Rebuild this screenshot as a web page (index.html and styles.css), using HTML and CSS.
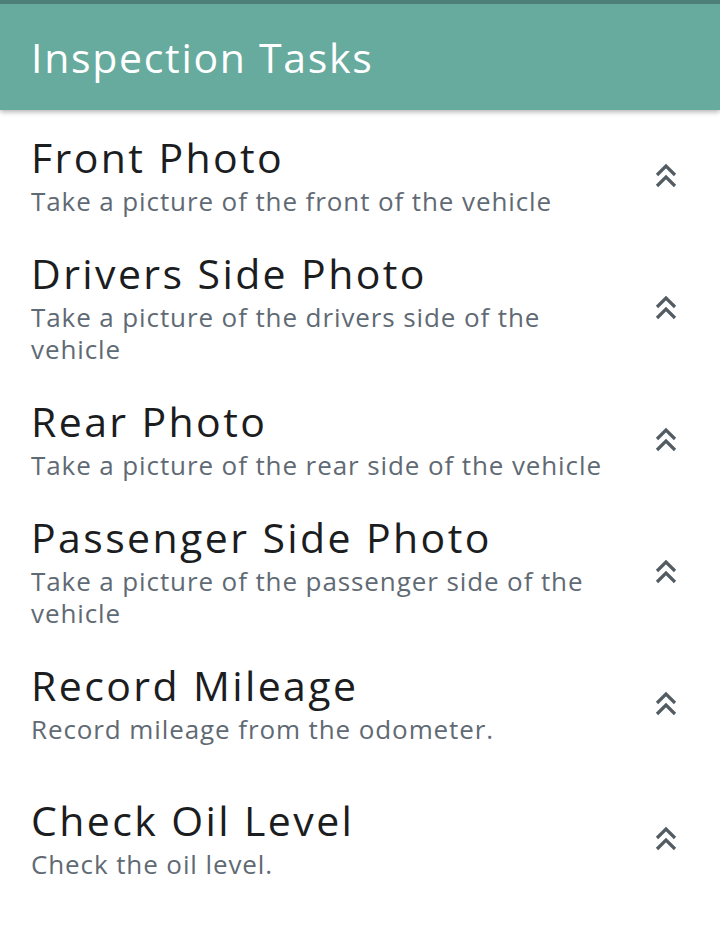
FILE: index.html
```html
<!DOCTYPE html>
<html>
<head>
<meta charset="utf-8">
<link rel="stylesheet" href="styles.css">
</head>
<body>
<header class="appbar">
  <h1 class="appbar-title">Inspection Tasks</h1>
</header>
<main class="task-list">
  <div class="task">
    <div class="task-text">
      <div class="task-title">Front Photo</div>
      <div class="task-desc">Take a picture of the front of the vehicle</div>
    </div>
    <svg class="chev" viewBox="0 0 24 26"><path d="M3 12 L12 3 L21 12 M3 23 L12 14 L21 23"/></svg>
  </div>
  <div class="task">
    <div class="task-text">
      <div class="task-title">Drivers Side Photo</div>
      <div class="task-desc">Take a picture of the drivers side of the vehicle</div>
    </div>
    <svg class="chev" viewBox="0 0 24 26"><path d="M3 12 L12 3 L21 12 M3 23 L12 14 L21 23"/></svg>
  </div>
  <div class="task">
    <div class="task-text">
      <div class="task-title">Rear Photo</div>
      <div class="task-desc">Take a picture of the rear side of the vehicle</div>
    </div>
    <svg class="chev" viewBox="0 0 24 26"><path d="M3 12 L12 3 L21 12 M3 23 L12 14 L21 23"/></svg>
  </div>
  <div class="task">
    <div class="task-text">
      <div class="task-title">Passenger Side Photo</div>
      <div class="task-desc">Take a picture of the passenger side of the vehicle</div>
    </div>
    <svg class="chev" viewBox="0 0 24 26"><path d="M3 12 L12 3 L21 12 M3 23 L12 14 L21 23"/></svg>
  </div>
  <div class="task">
    <div class="task-text">
      <div class="task-title">Record Mileage</div>
      <div class="task-desc">Record mileage from the odometer.</div>
    </div>
    <svg class="chev" viewBox="0 0 24 26"><path d="M3 12 L12 3 L21 12 M3 23 L12 14 L21 23"/></svg>
  </div>
  <div class="task task-last">
    <div class="task-text">
      <div class="task-title">Check Oil Level</div>
      <div class="task-desc">Check the oil level.</div>
    </div>
    <svg class="chev" viewBox="0 0 24 26"><path d="M3 12 L12 3 L21 12 M3 23 L12 14 L21 23"/></svg>
  </div>
</main>
</body>
</html>
```

FILE: styles.css
```css
html, body {
  margin: 0;
  padding: 0;
  background: #ffffff;
  font-family: "Open Sans", "Noto Sans", sans-serif;
}
.appbar {
  border-top: 4px solid #4d7f78;
  background: #67ab9f;
  height: 106px;
  display: flex;
  align-items: center;
  padding: 0 31px;
  box-shadow: 0 2px 5px rgba(0,0,0,0.3);
  position: relative;
  z-index: 1;
}
.appbar-title {
  margin: 0;
  font-weight: 400;
  font-size: 41px;
  line-height: normal;
  letter-spacing: 1.7px;
  color: #ffffff;
}
.task-list {
  padding-top: 2px;
}
.task {
  height: 132px;
  display: flex;
  align-items: center;
  padding: 0 42px 0 31px;
}
.task-last {
  height: 138px;
}
.task-text {
  width: 590px;
  flex: none;
  padding-bottom: 6px;
}
.task-title {
  font-size: 41px;
  line-height: 48px;
  color: #1b1d1f;
  letter-spacing: 2.4px;
}
.task-desc {
  margin-top: 4px;
  font-size: 26px;
  line-height: 32px;
  color: #5f6a74;
  letter-spacing: 0.9px;
}
.chev {
  margin-left: auto;
  margin-bottom: 4px;
  width: 24px;
  height: 26px;
  fill: none;
  stroke: #535c63;
  stroke-width: 3.2;
  stroke-linecap: butt;
  stroke-linejoin: miter;
}
```
